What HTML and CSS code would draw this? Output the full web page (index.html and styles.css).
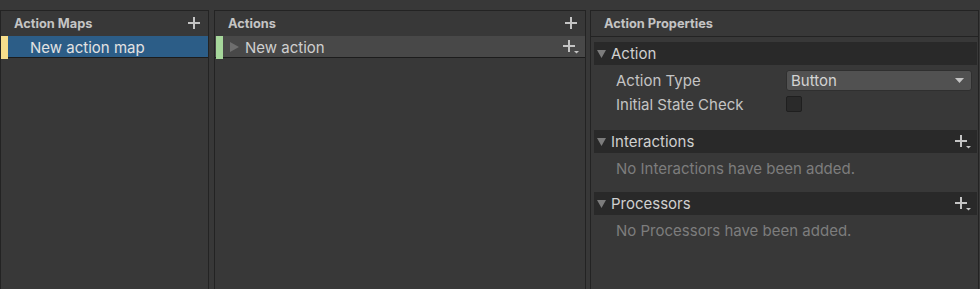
FILE: index.html
```html
<!DOCTYPE html>
<html>
<head>
<meta charset="utf-8">
<link rel="stylesheet" href="styles.css">
</head>
<body>
<div class="editor">
  <section class="panel maps">
    <div class="panel-head">
      <span class="title">Action Maps</span>
      <svg class="plus" width="12" height="12" viewBox="0 0 12 12"><path d="M6 0v12M0 6h12" stroke="#c4c4c4" stroke-width="2"/></svg>
    </div>
    <div class="row selected">
      <span class="tag yellow"></span>
      <span class="label">New action map</span>
    </div>
  </section>

  <section class="panel actions">
    <div class="panel-head">
      <span class="title">Actions</span>
      <svg class="plus" width="12" height="12" viewBox="0 0 12 12"><path d="M6 0v12M0 6h12" stroke="#c4c4c4" stroke-width="2"/></svg>
    </div>
    <div class="row inactive">
      <span class="tag green"></span>
      <svg class="tri-right" width="9" height="10" viewBox="0 0 9 10"><polygon points="0,0 9,5 0,10" fill="#6e6e6e"/></svg>
      <span class="label">New action</span>
      <svg class="plus-drop" width="16" height="14" viewBox="0 0 16 14"><path d="M6 0v12M0 6h12" stroke="#c4c4c4" stroke-width="2"/><polygon points="11,11 16,11 13.5,13.5" fill="#c4c4c4"/></svg>
    </div>
  </section>

  <section class="panel props">
    <div class="panel-head bordered">
      <span class="title">Action Properties</span>
    </div>
    <div class="props-body">
      <div class="foldout">
        <svg class="tri-down" width="9" height="8" viewBox="0 0 9 8"><polygon points="0,0 9,0 4.5,8" fill="#7c7c7c"/></svg>
        <span class="fold-title">Action</span>
      </div>
      <div class="field">
        <span class="field-label">Action Type</span>
        <div class="popup">
          <span>Button</span>
          <svg width="9" height="5" viewBox="0 0 9 5"><polygon points="0,0 9,0 4.5,5" fill="#c4c4c4"/></svg>
        </div>
      </div>
      <div class="field">
        <span class="field-label">Initial State Check</span>
        <div class="checkbox"></div>
      </div>

      <div class="foldout spaced">
        <svg class="tri-down" width="9" height="8" viewBox="0 0 9 8"><polygon points="0,0 9,0 4.5,8" fill="#7c7c7c"/></svg>
        <span class="fold-title">Interactions</span>
        <svg class="plus-drop" width="16" height="14" viewBox="0 0 16 14"><path d="M6 0v12M0 6h12" stroke="#c4c4c4" stroke-width="2"/><polygon points="11,11 16,11 13.5,13.5" fill="#c4c4c4"/></svg>
      </div>
      <div class="empty">No Interactions have been added.</div>

      <div class="foldout">
        <svg class="tri-down" width="9" height="8" viewBox="0 0 9 8"><polygon points="0,0 9,0 4.5,8" fill="#7c7c7c"/></svg>
        <span class="fold-title">Processors</span>
        <svg class="plus-drop" width="16" height="14" viewBox="0 0 16 14"><path d="M6 0v12M0 6h12" stroke="#c4c4c4" stroke-width="2"/><polygon points="11,11 16,11 13.5,13.5" fill="#c4c4c4"/></svg>
      </div>
      <div class="empty">No Processors have been added.</div>
    </div>
  </section>
</div>
</body>
</html>
```

FILE: styles.css
```css
html, body {
  margin: 0;
  padding: 0;
  background: #383838;
  height: 289px;
  overflow: hidden;
}

body {
  font-family: Inter, "Noto Sans", sans-serif;
  color: #c4c4c4;
}

.editor {
  display: flex;
  padding-top: 10px;
  height: 279px;
}

.panel {
  box-sizing: border-box;
  border: 1px solid #232323;
  border-bottom: none;
  height: 290px;
  display: flex;
  flex-direction: column;
}

.maps { width: 209px; }
.actions { width: 372px; margin-left: 5px; }
.props { width: 389px; margin-left: 4px; }

.panel-head {
  height: 25px;
  display: flex;
  align-items: center;
  justify-content: space-between;
  padding: 0 8px 0 13px;
  flex-shrink: 0;
}

.panel-head.bordered {
  border-bottom: 1px solid #232323;
}

.title {
  font-size: 12.8px;
  font-weight: 700;
  color: #c4c4c4;
}

.plus { display: block; margin-top: -1px; }

.row {
  height: 21px;
  display: flex;
  align-items: center;
  border-bottom: 1px solid #1c1c1c;
  position: relative;
  font-size: 15px;
}

.row .label { padding-top: 1px; }

.row.selected { background: #2c5d87; color: #e2e2e2; }
.row.inactive { background: #484848; color: #cfcfcf; padding-right: 6px; }

.tag {
  align-self: stretch;
  width: 7px;
  margin-bottom: -2px;
  flex-shrink: 0;
}
.tag.yellow { background: #f7df8c; }
.tag.green { background: #a6d79b; margin-left: 1px; }

.maps .label { margin-left: 22px; }

.tri-right { margin-left: 7px; flex-shrink: 0; }
.actions .label { margin-left: 6px; flex: 1; }

.plus-drop { display: block; flex-shrink: 0; }

.props-body {
  padding: 5px 1px 0 3px;
}

.foldout {
  height: 23px;
  background: #292929;
  display: flex;
  align-items: center;
  padding: 0 6px 0 3px;
  font-size: 15px;
}

.foldout.spaced { margin-top: 14px; }

.fold-title {
  margin-left: 5px;
  flex: 1;
  color: #d0d0d0;
}

.field {
  height: 24px;
  display: flex;
  align-items: center;
  padding-left: 22px;
  font-size: 15px;
}

.foldout + .field { margin-top: 3px; }

.field-label {
  width: 170px;
  color: #c4c4c4;
}

.popup {
  box-sizing: border-box;
  width: 186px;
  height: 21px;
  background: #515151;
  border: 1px solid #2f2f2f;
  border-radius: 3px;
  display: flex;
  align-items: center;
  justify-content: space-between;
  padding: 0 7px 0 4px;
  color: #d4d4d4;
}

.popup svg { display: block; }

.checkbox {
  box-sizing: border-box;
  width: 16px;
  height: 16px;
  background: #2a2a2a;
  border: 1px solid #1f1f1f;
  border-radius: 2px;
}

.empty {
  height: 39px;
  box-sizing: border-box;
  padding: 5px 0 0 22px;
  line-height: 22px;
  font-size: 15px;
  color: #7d7d7d;
}
```
